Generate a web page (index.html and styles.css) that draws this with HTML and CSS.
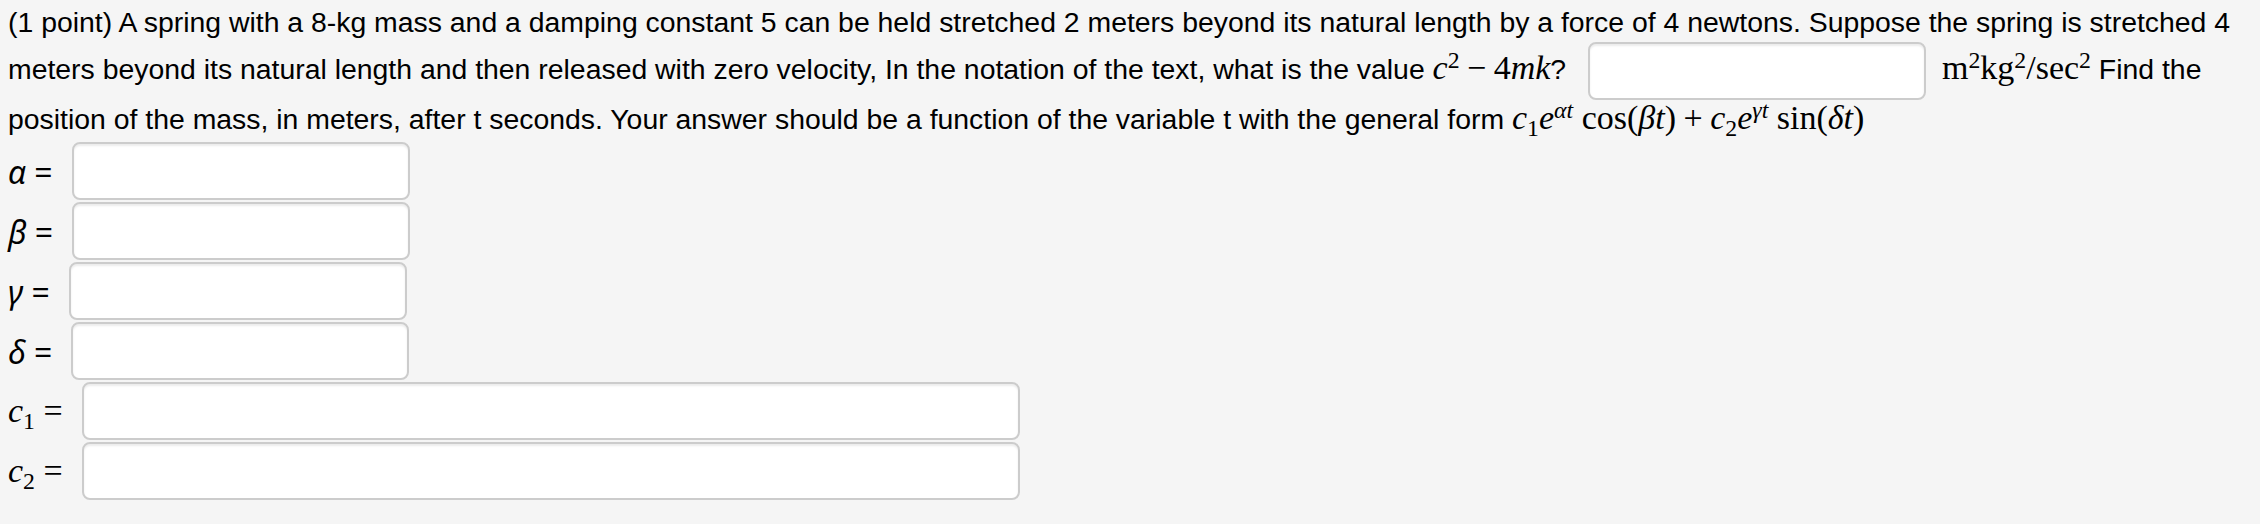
FILE: index.html
```html
<!DOCTYPE html>
<html>
<head>
<meta charset="utf-8">
<link rel="stylesheet" href="styles.css">
</head>
<body>
<div class="problem">
  <p class="text">(1 point) A spring with a 8-kg mass and a damping constant 5 can be held stretched 2 meters beyond its natural length by a force of 4 newtons. Suppose the spring is stretched 4 meters beyond its natural length and then released with zero velocity, In the notation of the text, what is the value <span class="m"><i>c</i><sup>2</sup><span class="op">−</span>4<i>mk</i></span>? <input class="ans ans-short" type="text"> <span class="m">m<sup>2</sup>kg<sup>2</sup>/sec<sup>2</sup></span> Find the position of the mass, in meters, after t seconds. Your answer should be a function of the variable t with the general form <span class="m"><i>c</i><sub>1</sub><i>e</i><sup><i>αt</i></sup> cos(<i>βt</i>)<span class="op">+</span><i>c</i><sub>2</sub><i>e</i><sup><i>γt</i></sup> sin(<i>δt</i>)</span></p>
  <div class="answers">
    <div class="row"><span class="lbl greek"><i>α</i> =</span><input class="ans ans-short" type="text"></div>
    <div class="row"><span class="lbl greek"><i>β</i> =</span><input class="ans ans-short" type="text"></div>
    <div class="row"><span class="lbl greek"><i>γ</i> =</span><input class="ans ans-short" type="text"></div>
    <div class="row"><span class="lbl greek"><i>δ</i> =</span><input class="ans ans-short" type="text"></div>
    <div class="row"><span class="lbl cl"><i>c</i><sub>1</sub> =</span><input class="ans ans-long" type="text"></div>
    <div class="row"><span class="lbl cl"><i>c</i><sub>2</sub> =</span><input class="ans ans-long" type="text"></div>
  </div>
</div>
</body>
</html>
```

FILE: styles.css
```css
html, body {
  margin: 0;
  padding: 0;
  background: #f5f5f5;
}

.problem {
  padding: 3px 8px 0 8px;
  font-family: "Liberation Sans", Arial, Helvetica, sans-serif;
  font-size: 28.4px;
  color: #000;
}

.text {
  margin: 0;
  line-height: 39px;
}

.m {
  font-family: "Liberation Serif", "Times New Roman", serif;
  font-size: 34px;
  line-height: 1;
}

.m i {
  font-style: italic;
}

.m sup {
  font-size: 70%;
  line-height: 0;
  vertical-align: 0.48em;
}

.m sub, .cl sub {
  font-size: 70%;
  line-height: 0;
  vertical-align: -0.28em;
}

.op {
  padding: 0 0.22em;
}

.ans {
  box-sizing: border-box;
  height: 58px;
  background: #fff;
  border: 2px solid #cccccc;
  border-radius: 8px;
  box-shadow: inset 0 2px 2px rgba(0, 0, 0, 0.075);
  padding: 0;
  margin: 0;
  outline: none;
}

.text .ans {
  display: inline-block;
  vertical-align: middle;
  margin: 0 8px 0 14px;
}

.ans-short {
  width: 338px;
}

.ans-long {
  width: 938px;
}

.answers {
  display: flex;
  flex-direction: column;
  gap: 2px;
  margin-top: 3px;
}

.row {
  display: flex;
  align-items: center;
  height: 58px;
}

.lbl {
  white-space: pre;
  margin-right: 19px;
}

.greek {
  font-family: "Noto Sans", "DejaVu Sans", sans-serif;
  font-size: 32px;
}

.cl {
  font-family: "Liberation Serif", "Times New Roman", serif;
  font-size: 34px;
  margin-right: 19px;
}
```
